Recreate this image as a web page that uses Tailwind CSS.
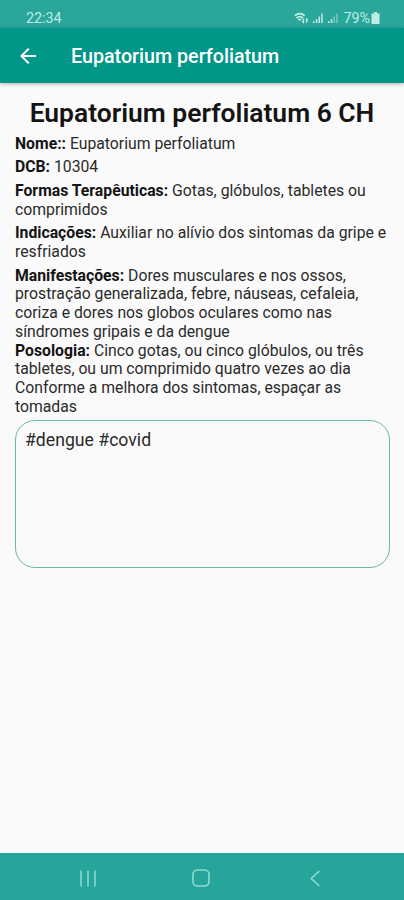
<!DOCTYPE html>
<html lang="pt-BR">
<head>
    <meta charset="UTF-8">
    <meta name="viewport" content="width=device-width, initial-scale=1.0">
    <title>Eupatorium perfoliatum</title>
    <script src="https://cdn.jsdelivr.net/npm/@tailwindcss/browser@4"></script>
</head>
<body class="flex h-screen flex-col overflow-hidden bg-[#fafafa] font-['Roboto',sans-serif] text-[#2a2a2a]">
    <!-- Barra de status -->
    <div class="flex h-7 shrink-0 items-center justify-between bg-[#2aa69a] pt-2 pr-6 pl-[26px] text-[14.300px] leading-5 text-[#bdeee6]">
        <span id="hora">22:34</span>
        <div class="flex items-center">
            <svg class="mr-1 h-3 w-[15px]" viewBox="0 0 15 12" fill="none" stroke="currentColor" stroke-width="1.700">
                <path d="M.8 3.800C3.500 1 8 1 10.700 3.800M2.500 6c2-1.800 4.500-1.800 6.500 0M4.300 8c1-.8 2-.8 3 0" />
                <path d="M9.500 6.500v4l-1.300-1.300M12.500 11V7l1.500 1.500" stroke-width="1.200" />
            </svg>
            <svg class="mr-[5px] h-3 w-[10px]" viewBox="0 0 10 12" fill="currentColor">
                <path d="M0 9h1.500v2H0zM2.800 7h1.500v4H2.800zM5.500 4.500H7V11H5.500zM8.200 1.500h1.500V11H8.200z" />
            </svg>
            <svg class="mr-[5px] h-3 w-[10px]" viewBox="0 0 10 12" fill="currentColor">
                <path d="M0 9h1.500v2H0zM2.800 7h1.500v4H2.800z" />
                <path d="M5.500 4.500H7V11H5.500zM8.200 1.500h1.500V11H8.200z" opacity=".5" />
            </svg>
            <span id="bateria" class="mr-px">79%</span>
            <svg class="h-3 w-[9px]" viewBox="0 0 9 12" fill="currentColor">
                <path d="M3 0h3v1.500h2.500V12h-8V1.500H3z" />
            </svg>
        </div>
    </div>

    <!-- Cabeçalho -->
    <header class="z-10 flex h-[55px] shrink-0 items-center bg-[#009688] pl-5 text-white shadow-[0_1px_4px_rgba(0,0,0,0.3)]">
        <svg class="mr-[35px] h-4 w-4" viewBox="4 4 16 16" fill="currentColor">
            <path d="M20 11H7.830l5.590-5.590L12 4l-8 8 8 8 1.410-1.410L7.830 13H20v-2z" />
        </svg>
        <h1 id="titulo" class="pt-0.5 text-[19.700px] font-medium whitespace-nowrap">Eupatorium perfoliatum</h1>
    </header>

    <!-- Conteúdo -->
    <main class="flex-1 px-[15px] pt-[14px] text-[15.750px] leading-[18.700px]">
        <h2 id="nome" class="mb-[5.500px] text-center text-[26.450px] leading-8 font-semibold whitespace-nowrap text-[#141414]">Eupatorium perfoliatum 6 CH</h2>
        <div class="flex flex-col gap-[5px]">
            <p><b class="font-bold text-[#141414]">Nome::</b> Eupatorium perfoliatum</p>
            <p><b class="font-bold text-[#141414]">DCB:</b> 10304</p>
            <p><b class="font-bold text-[#141414]">Formas Terapêuticas:</b> Gotas, glóbulos, tabletes ou<br>comprimidos</p>
            <p><b class="font-bold text-[#141414]">Indicações:</b> Auxiliar no alívio dos sintomas da gripe e<br>resfriados</p>
            <div>
                <p><b class="font-bold text-[#141414]">Manifestações:</b> Dores musculares e nos ossos,<br>prostração generalizada, febre, náuseas, cefaleia,<br>coriza e dores nos globos oculares como nas<br>síndromes gripais e da dengue</p>
                <p><b class="font-bold text-[#141414]">Posologia:</b> Cinco gotas, ou cinco glóbulos, ou três<br>tabletes, ou um comprimido quatro vezes ao dia<br>Conforme a melhora dos sintomas, espaçar as<br>tomadas</p>
            </div>
        </div>
        <div class="mt-[3.500px] h-[148px] w-[375px] rounded-[20px] border-[1.500px] border-[#68bba6] px-[9px] pt-[9.500px] text-[17.650px] leading-[21px]">
            <span id="tags">#dengue #covid</span>
        </div>
    </main>

    <!-- Barra de navegação -->
    <nav class="flex h-[47px] shrink-0 items-center bg-[#27a59a] pt-[3px] pl-20 text-[#8fdcd2]">
        <svg class="mr-24 h-[17px] w-4" viewBox="0 0 16 17" stroke="currentColor" stroke-width="1.500">
            <path d="M1 .5v16M8 .5v16M15 .5v16" />
        </svg>
        <svg class="mr-[100px] h-[18px] w-[18px]" viewBox="0 0 18 18" fill="none" stroke="currentColor" stroke-width="1.600">
            <rect x="1" y="1" width="16" height="16" rx="4.500" />
        </svg>
        <svg class="h-[17px] w-[10px]" viewBox="0 0 10 17" fill="none" stroke="currentColor" stroke-width="1.600">
            <path d="M9.300 1L1.300 8.500l8 7.500" />
        </svg>
    </nav>
</body>
</html>
